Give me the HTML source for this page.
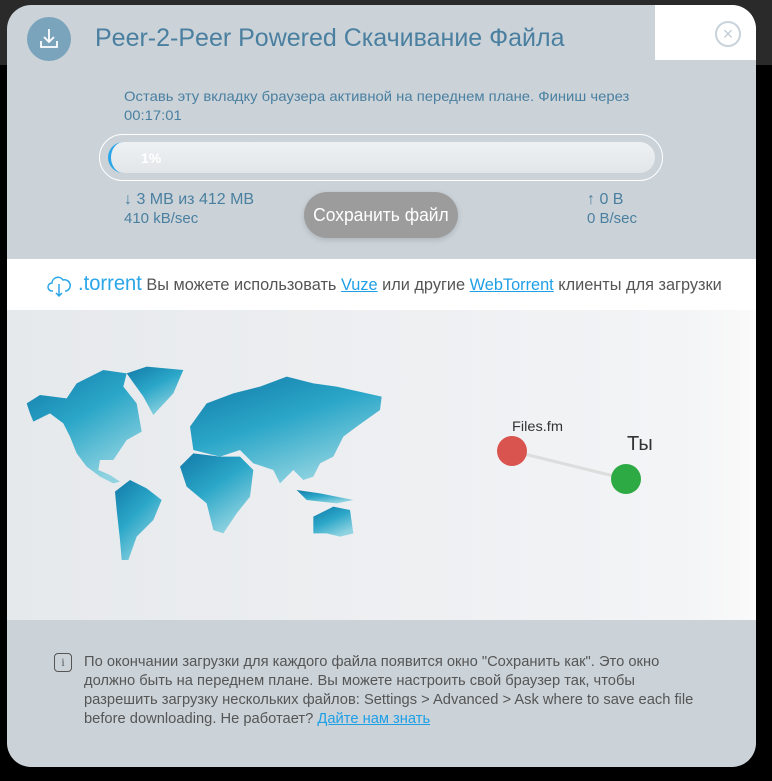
<!DOCTYPE html>
<html><head><meta charset="utf-8"><style>
*{margin:0;padding:0;box-sizing:border-box}
body{width:772px;height:781px;background:#000;position:relative;overflow:hidden;font-family:"Liberation Sans","DejaVu Sans",sans-serif}
.a{position:absolute;white-space:nowrap}
.c{display:inline-block;transform-origin:0 0}
#modal{position:absolute;left:7px;top:5px;width:749px;height:762px;background:#cbd3d9;border-radius:24px;overflow:hidden}
a{color:#1e9fe6}
</style></head><body>
<div class="a" style="left:0;top:0;width:772px;height:65px;background:#2a2a2a"></div>
<div id="modal">
 <div class="a" style="left:648px;top:0;width:101px;height:55px;background:#fff"></div>
 <div class="a" style="left:708px;top:16px;width:26px;height:26px;border:2px solid #c9d3db;border-radius:50%;color:#c2ccd4;font-size:18px;line-height:22px;text-align:center">×</div>
 <div class="a" style="left:20px;top:12px;width:44px;height:44px;background:#7aa3bc;border-radius:50%">
  <svg width="44" height="44" viewBox="0 0 44 44"><path d="M22 12v13M17 20l5 5 5-5M14 24v6h16v-6" stroke="#fff" stroke-width="1.8" fill="none"/></svg>
 </div>
 <div class="a" style="left:88px;top:19px;color:#4a7fa0;font-size:25px"><span class="c" style="transform:scaleX(1.0)">Peer-2-Peer Powered Скачивание Файла</span></div>
 <div class="a" style="left:117px;top:82px;color:#4a7fa0;font-size:14px;line-height:19px"><span class="c" style="transform:scaleX(1.06)">Оставь эту вкладку браузера активной на переднем плане. Финиш через<br>00:17:01</span></div>
 <div class="a" style="left:92px;top:129px;width:564px;height:47px;border:1.5px solid #fff;border-radius:24px"></div>
 <div class="a" style="left:101px;top:137px;width:547px;height:31px;background:linear-gradient(#eef1f3,#e2e6e9);border-radius:16px;border-left:3px solid #2aa6e8"></div>
 <div class="a" style="left:134px;top:145px;color:#fff;font-weight:bold;font-size:14px">1%</div>
 <div class="a" style="left:117px;top:185px;color:#4a7fa0;font-size:16px;line-height:19px"><span class="c" style="transform:scaleX(1.0)">↓ 3 MB из 412 MB<br><span style="font-size:15px">410 kB/sec</span></span></div>
 <div class="a" style="left:580px;top:185px;color:#4a7fa0;font-size:16px;line-height:19px"><span class="c" style="transform:scaleX(1.0)">↑ 0 B<br><span style="font-size:15px">0 B/sec</span></span></div>
 <div class="a" style="left:297px;top:187px;width:154px;height:46px;background:#9c9c9c;border-radius:23px;box-shadow:0 2px 6px rgba(0,0,0,.15);color:#fff;font-size:18px;line-height:46px;text-align:center"><span class="c" style="transform:scaleX(0.97);transform-origin:50% 50%">Сохранить файл</span></div>
 <div class="a" style="left:0;top:254px;width:749px;height:51px;background:#fff"></div>
 <div class="a" style="left:40px;top:268px"><svg width="24" height="26" viewBox="0 0 24 26"><path d="M6 18H5a4 4 0 0 1 0-8 6 6 0 0 1 11-3 5 5 0 0 1 3 11h-1M12 11v12M9 20l3 3 3-3" stroke="#2aa6e8" stroke-width="1.5" fill="none"/></svg></div>
 <div class="a" style="left:71px;top:267px;font-size:17px;color:#555"><span class="c" style="transform:scaleX(0.96)"><span style="color:#2aa6e8;font-size:21px">.torrent</span> Вы можете использовать <a href="#">Vuze</a> или другие <a href="#">WebTorrent</a> клиенты для загрузки</span></div>
 <div class="a" style="left:0;top:305px;width:749px;height:310px;background:linear-gradient(90deg,#e6e9ec,#f3f4f6 90%,#fafafa)"></div>
 <svg class="a" style="left:13px;top:355px" width="370" height="240" viewBox="0 0 1110 720">
  <defs><linearGradient id="g" x1="0" y1="0" x2="0.6" y2="1"><stop offset="0" stop-color="#137aa8"/><stop offset="0.5" stop-color="#2aa6c8"/><stop offset="1" stop-color="#8fd3e0"/></linearGradient></defs>
  <g fill="url(#g)">
  <polygon points="20,130 60,105 140,115 170,70 250,30 320,40 310,80 350,130 365,215 320,240 280,300 240,300 235,330 270,345 300,365 280,370 240,350 200,320 170,280 150,230 130,190 90,160 40,185 30,160"/>
  <polygon points="320,40 380,20 490,30 460,100 400,165 370,110"/>
  <polygon points="285,395 330,360 380,385 425,420 400,480 350,530 325,600 305,600 300,540 290,450"/>
  <polygon points="510,200 560,130 640,100 720,80 800,50 880,70 950,80 1085,110 1080,150 1010,200 970,230 940,290 900,310 880,350 850,360 820,330 780,370 760,330 700,310 660,270 600,290 560,280 520,270"/>
  <polygon points="480,320 520,280 600,290 660,290 700,330 690,410 650,460 610,520 580,510 560,430 500,380"/>
  <polygon points="880,470 940,440 990,450 1000,520 960,530 920,520 880,520"/>
  <polygon points="830,390 900,400 1000,420 950,430 860,420"/>
  </g>
 </svg>
 <svg class="a" style="left:0;top:305px" width="749" height="310"><line x1="505" y1="141" x2="619" y2="169" stroke="#ddd" stroke-width="3"/><circle cx="505" cy="141" r="15" fill="#d9534f"/><circle cx="619" cy="169" r="15" fill="#2eaa44"/></svg>
 <div class="a" style="left:505px;top:413px;font-size:14px;color:#333"><span class="c" style="transform:scaleX(1.04)">Files.fm</span></div>
 <div class="a" style="left:620px;top:428px;font-size:20px;color:#333"><span class="c" style="transform:scaleX(1.0)">Ты</span></div>
 <div class="a" style="left:47px;top:648px;width:18px;height:19px;border:1.5px solid #555;border-radius:4px;font-size:12px;color:#555;text-align:center;line-height:16px;font-family:'Liberation Serif',serif">i</div>
 <div class="a" style="left:77px;top:647px;font-size:15px;line-height:19px;color:#555"><span class="c" style="transform:scaleX(0.98)">По окончании загрузки для каждого файла появится окно "Сохранить как". Это окно<br>должно быть на переднем плане. Вы можете настроить свой браузер так, чтобы<br>разрешить загрузку нескольких файлов: Settings &gt; Advanced &gt; Ask where to save each file<br>before downloading. Не работает? <a href="#">Дайте нам знать</a></span></div>
</div>
</body></html>
